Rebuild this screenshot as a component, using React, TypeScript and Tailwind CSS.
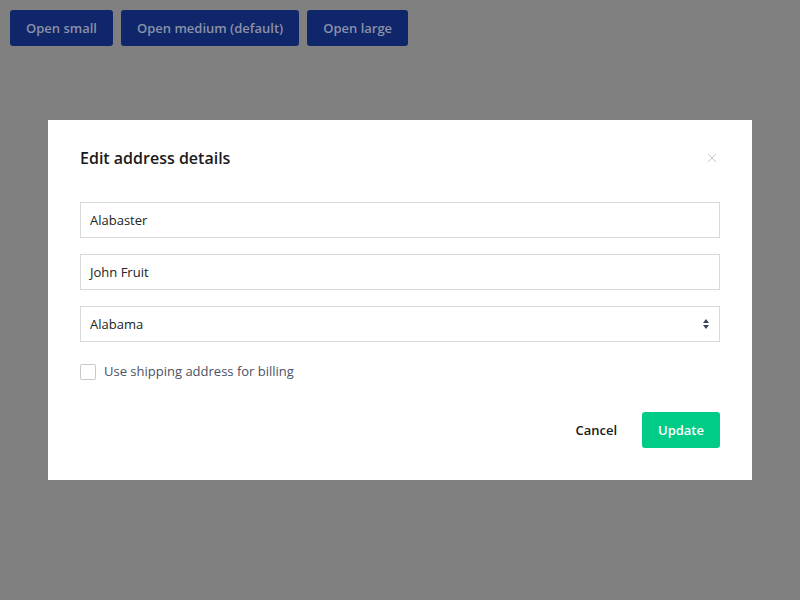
import React from "react";

export default function App() {
  return (
    <div className="relative w-[800px] h-[600px] bg-[#808080] overflow-hidden" style={{ fontFamily: '"Open Sans", sans-serif' }}>
      <div className="flex gap-2 pt-[10px] pl-[10px]">
        <button className="h-9 px-4 pt-[2px] rounded-[3px] bg-[#10266a] text-[#8a91a8] text-[13px] font-semibold">Open small</button>
        <button className="h-9 px-4 pt-[2px] rounded-[3px] bg-[#10266a] text-[#8a91a8] text-[13px] font-semibold">Open medium (default)</button>
        <button className="h-9 px-4 pt-[2px] rounded-[3px] bg-[#10266a] text-[#8a91a8] text-[13px] font-semibold">Open large</button>
      </div>
      <div className="absolute left-[48px] top-[120px] w-[704px] h-[360px] bg-white px-8 pt-[26px] pb-8 flex flex-col">
        <div className="flex items-center justify-between h-6">
          <h2 className="text-[16px] font-semibold text-[#1a1a1a] leading-6">Edit address details</h2>
          <svg width="10" height="10" viewBox="0 0 10 10" className="mr-[3px]">
            <path d="M1 1L9 9M9 1L1 9" stroke="#c4c8d0" strokeWidth="1" />
          </svg>
        </div>
        <div className="mt-8 flex flex-col gap-4">
          <div className="h-9 border border-[#d9d9d9] flex items-center px-[9px] pt-[2px] text-[13px] text-[#222]">Alabaster</div>
          <div className="h-9 border border-[#d9d9d9] flex items-center px-[9px] pt-[2px] text-[13px] text-[#222]">John Fruit</div>
          <div className="h-9 border border-[#d9d9d9] flex items-center justify-between pl-[9px] pr-[9px] text-[13px] text-[#222]">
            <span className="pt-[2px]">Alabama</span>
            <svg width="8" height="12" viewBox="0 0 8 12">
              <path d="M4 1L7 5H1Z" fill="#3d4658" />
              <path d="M4 11L7 7H1Z" fill="#3d4658" />
            </svg>
          </div>
        </div>
        <div className="mt-[21px] flex items-center gap-2">
          <div className="w-4 h-4 border border-[#c8c8c8] rounded-[2px] bg-white" />
          <span className="text-[13px] text-[#4a5266] -mt-[1px]">Use shipping address for billing</span>
        </div>
        <div className="mt-auto flex justify-end items-center gap-6">
          <button className="h-9 px-[1px] pt-[2px] text-[13px] font-semibold text-[#1a1a1a]">Cancel</button>
          <button className="h-9 w-[78px] pt-[2px] rounded-[3px] bg-[#00cc88] text-white text-[13px] font-semibold">Update</button>
        </div>
      </div>
    </div>
  );
}
